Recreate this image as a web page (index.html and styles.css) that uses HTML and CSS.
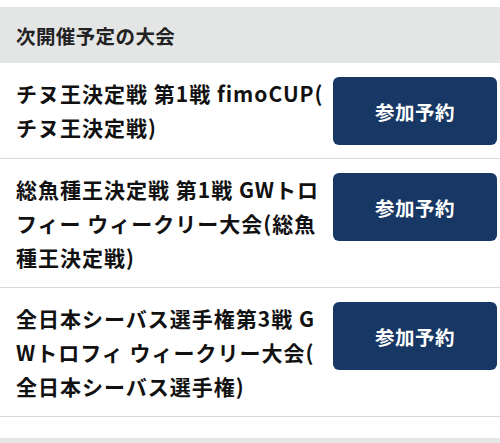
FILE: index.html
```html
<!DOCTYPE html>
<html lang="ja">
<head>
  <meta charset="UTF-8">
  <title>次開催予定の大会</title>
  <meta name="viewport" content="width=device-width, initial-scale=1.0">
  <link rel="stylesheet" href="styles.css">
</head>
<body>
  <section class="events">
    <h2 class="events-title">次開催予定の大会</h2>
    <ul class="event-list">
      <li class="event">
        <p class="event-name">チヌ王決定戦 第1戦 fimoCUP(<br>チヌ王決定戦)</p>
        <a class="entry-btn" href="#">参加予約</a>
      </li>
      <li class="event">
        <p class="event-name">総魚種王決定戦 第1戦 GWトロ<br>フィー ウィークリー大会(総魚<br>種王決定戦)</p>
        <a class="entry-btn" href="#">参加予約</a>
      </li>
      <li class="event">
        <p class="event-name">全日本シーバス選手権第3戦 G<br>Wトロフィ ウィークリー大会(<br>全日本シーバス選手権)</p>
        <a class="entry-btn" href="#">参加予約</a>
      </li>
    </ul>
  </section>
  <div class="next-section"></div>
</body>
</html>
```

FILE: styles.css
```css
html, body {
  margin: 0;
  padding: 0;
  background: #fff;
  font-family: "Noto Sans CJK JP", "Noto Sans", sans-serif;
  color: #111;
}
.events {
  padding-top: 7px;
}
.events-title {
  margin: 0;
  height: 56px;
  display: flex;
  align-items: center;
  padding: 0 16px;
  background: #e4e5e5;
  font-size: 19.5px;
  font-weight: 700;
  letter-spacing: 0.4px;
  color: #222;
}
.event-list {
  list-style: none;
  margin: 0;
  padding: 0;
}
.event {
  display: flex;
  align-items: flex-start;
  justify-content: space-between;
  padding: 13px 3px 13px 16px;
  border-bottom: 1px solid #d9d9d9;
}
.event-name {
  margin: 0;
  font-size: 21px;
  line-height: 34px;
  font-weight: 700;
  letter-spacing: 1px;
  white-space: nowrap;
}
.entry-btn {
  flex: 0 0 164px;
  height: 68px;
  margin-top: 1px;
  display: flex;
  align-items: center;
  justify-content: center;
  background: #173865;
  color: #fff;
  border-radius: 6px;
  text-decoration: none;
  font-size: 19.5px;
  font-weight: 700;
  letter-spacing: 0.5px;
}
.next-section {
  margin-top: 21px;
  height: 40px;
  background: #e4e5e5;
}
```
